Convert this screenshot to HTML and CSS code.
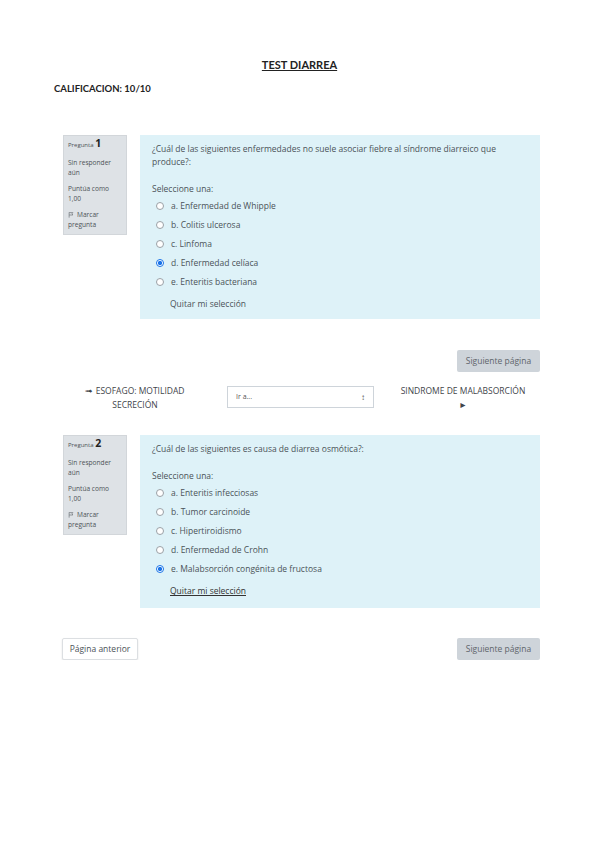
FILE: index.html
```html
<!DOCTYPE html>
<html lang="es">
<head>
<meta charset="utf-8">
<title>TEST DIARREA</title>
<link rel="stylesheet" href="styles.css">
</head>
<body>
<div class="page">
  <h1 class="title">TEST DIARREA</h1>
  <p class="grade">CALIFICACION: 10/10</p>

  <div class="que que1">
    <div class="info">
      <div class="qno"><span class="lbl">Pregunta</span> <b>1</b></div>
      <div class="st">Sin responder aún</div>
      <div class="st">Puntúa como 1,00</div>
      <div class="st flag"><svg class="fl" viewBox="0 0 8 8" width="6" height="6"><path d="M1.5 0.5v7M1.5 0.8h5l-1.2 1.6 1.2 1.6h-5" fill="none" stroke="#6a7076" stroke-width="0.9"/></svg>Marcar pregunta</div>
    </div>
    <div class="content">
      <p class="qtext">¿Cuál de las siguientes enfermedades no suele asociar fiebre al síndrome diarreico que produce?:</p>
      <p class="prompt">Seleccione una:</p>
      <div class="opt"><span class="radio"></span>a. Enfermedad de Whipple</div>
      <div class="opt"><span class="radio"></span>b. Colitis ulcerosa</div>
      <div class="opt"><span class="radio"></span>c. Linfoma</div>
      <div class="opt"><span class="radio on"></span>d. Enfermedad celíaca</div>
      <div class="opt"><span class="radio"></span>e. Enteritis bacteriana</div>
      <div class="clear">Quitar mi selección</div>
    </div>
  </div>

  <div class="btnrow first"><span class="btn gray">Siguiente página</span></div>

  <div class="nav">
    <div class="navl">&#10143; ESOFAGO: MOTILIDAD<br>SECRECIÓN</div>
    <div class="sel"><span>Ir a...</span><span class="arr">&#8597;</span></div>
    <div class="navr">SINDROME DE MALABSORCIÓN<br>&#9658;</div>
  </div>

  <div class="que que2">
    <div class="info">
      <div class="qno"><span class="lbl">Pregunta</span> <b>2</b></div>
      <div class="st">Sin responder aún</div>
      <div class="st">Puntúa como 1,00</div>
      <div class="st flag"><svg class="fl" viewBox="0 0 8 8" width="6" height="6"><path d="M1.5 0.5v7M1.5 0.8h5l-1.2 1.6 1.2 1.6h-5" fill="none" stroke="#6a7076" stroke-width="0.9"/></svg>Marcar pregunta</div>
    </div>
    <div class="content">
      <p class="qtext">¿Cuál de las siguientes es causa de diarrea osmótica?:</p>
      <p class="prompt">Seleccione una:</p>
      <div class="opt"><span class="radio"></span>a. Enteritis infecciosas</div>
      <div class="opt"><span class="radio"></span>b. Tumor carcinoide</div>
      <div class="opt"><span class="radio"></span>c. Hipertiroidismo</div>
      <div class="opt"><span class="radio"></span>d. Enfermedad de Crohn</div>
      <div class="opt"><span class="radio on"></span>e. Malabsorción congénita de fructosa</div>
      <div class="clear ul">Quitar mi selección</div>
    </div>
  </div>

  <div class="btnrow last">
    <span class="btn white">Página anterior</span>
    <span class="btn gray">Siguiente página</span>
  </div>
</div>
</body>
</html>
```

FILE: styles.css
```css
html, body {
  margin: 0;
  padding: 0;
  background: #ffffff;
}
.page {
  font-family: "Open Sans", "Noto Sans", sans-serif;
  color: #555a5f;
  padding-top: 57px;
}
.title {
  margin: 0;
  text-align: center;
  font-family: "Lato", sans-serif;
  font-weight: 700;
  font-size: 11px;
  color: #222;
  text-decoration: underline;
  line-height: 16px;
}
.grade {
  margin: 9px 0 0 54px;
  font-family: "Lato", sans-serif;
  font-weight: 700;
  font-size: 9.5px;
  color: #222;
  line-height: 14px;
}
.que {
  display: flex;
  align-items: flex-start;
  gap: 13px;
  margin-left: 63px;
}
.que1 { margin-top: 39px; }
.que2 { margin-top: 23px; }
.info {
  width: 64px;
  box-sizing: border-box;
  background: #dee2e6;
  border: 1px solid #d2d6da;
  padding: 0 4px 4px 4px;
  font-size: 6.6px;
  line-height: 10px;
  color: #4d5257;
}
.qno { margin-bottom: 6px; line-height: 14px; }
.qno .lbl { font-size: 6px; }
.qno b { font-size: 10.5px; color: #222; }
.st { margin-bottom: 6px; padding-right: 6px; }
.st.flag { margin-bottom: 0; }
.fl { margin-right: 3px; vertical-align: -0.5px; }
.content {
  width: 400px;
  box-sizing: border-box;
  background: #def2f8;
  padding: 7px 12px 9px 12px;
  font-size: 8.5px;
  line-height: 13px;
  color: #4b5258;
}
.que1 .content { height: 184px; }
.que2 .content { height: 173px; }
.qtext { margin: 0; }
.prompt { margin: 14px 0 1px 0; }
.opt {
  display: flex;
  align-items: center;
  height: 19px;
  padding-left: 4px;
}
.radio {
  width: 6px;
  height: 6px;
  border: 1px solid #9aa0a6;
  border-radius: 50%;
  background: #fff;
  margin-right: 7px;
  flex: none;
}
.radio.on {
  border-color: #1a73e8;
  background: radial-gradient(circle, #1a73e8 45%, #fff 55%);
}
.clear {
  margin-top: 6px;
  padding-left: 18px;
  color: #4b5258;
}
.clear.ul { text-decoration: underline; color: #333; }
.btnrow {
  display: flex;
  justify-content: flex-end;
  padding-right: 59px;
}
.btnrow.first { margin-top: 31px; }
.btnrow.last {
  margin-top: 30px;
  justify-content: space-between;
  padding-left: 62px;
}
.btn {
  display: inline-block;
  height: 22px;
  line-height: 22px;
  padding: 0 6px;
  font-size: 8.5px;
  border-radius: 2px;
  box-sizing: border-box;
}
.btn.gray { background: #ced4da; color: #5f656b; width: 83px; text-align: center; }
.btn.white { background: #fff; border: 1px solid #dcdfe2; box-shadow: 0 1px 2px rgba(0,0,0,0.12); color: #4b5258; width: 76px; text-align: center; line-height: 20px; }
.nav {
  display: flex;
  align-items: flex-start;
  margin-top: 12px;
  font-size: 8.5px;
  line-height: 14px;
  color: #3f454b;
}
.navl {
  width: 227px;
  box-sizing: border-box;
  padding-left: 43px;
  text-align: center;
}
.sel {
  width: 147px;
  height: 22px;
  box-sizing: border-box;
  border: 1px solid #ced4da;
  margin-top: 2px;
  display: flex;
  align-items: center;
  justify-content: space-between;
  padding: 0 8px;
  font-size: 7px;
  color: #555;
}
.arr { font-size: 8px; }
.navr {
  width: 178px;
  text-align: center;
}
```
